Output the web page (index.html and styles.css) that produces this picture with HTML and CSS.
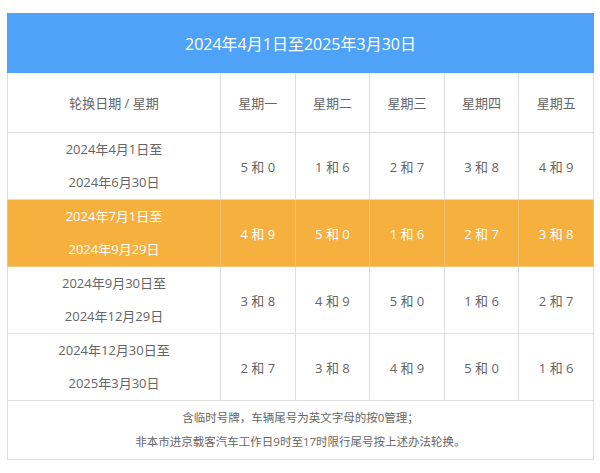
FILE: index.html
```html
<!DOCTYPE html>
<html lang="zh-CN">
<head>
<meta charset="utf-8">
<link rel="stylesheet" href="styles.css">
</head>
<body>
<div class="wrap">
<table class="plan">
  <colgroup>
    <col class="c-date"><col class="c-day"><col class="c-day"><col class="c-day"><col class="c-day"><col class="c-day">
  </colgroup>
  <tr class="title"><td colspan="6">2024年4月1日至2025年3月30日</td></tr>
  <tr class="head">
    <td>轮换日期 / 星期</td><td>星期一</td><td>星期二</td><td>星期三</td><td>星期四</td><td>星期五</td>
  </tr>
  <tr class="row">
    <td><p>2024年4月1日至</p><p>2024年6月30日</p></td>
    <td>5 和 0</td><td>1 和 6</td><td>2 和 7</td><td>3 和 8</td><td>4 和 9</td>
  </tr>
  <tr class="row current">
    <td><p>2024年7月1日至</p><p>2024年9月29日</p></td>
    <td>4 和 9</td><td>5 和 0</td><td>1 和 6</td><td>2 和 7</td><td>3 和 8</td>
  </tr>
  <tr class="row">
    <td><p>2024年9月30日至</p><p>2024年12月29日</p></td>
    <td>3 和 8</td><td>4 和 9</td><td>5 和 0</td><td>1 和 6</td><td>2 和 7</td>
  </tr>
  <tr class="row">
    <td><p>2024年12月30日至</p><p>2025年3月30日</p></td>
    <td>2 和 7</td><td>3 和 8</td><td>4 和 9</td><td>5 和 0</td><td>1 和 6</td>
  </tr>
  <tr class="note">
    <td colspan="6"><p>含临时号牌，车辆尾号为英文字母的按0管理；</p><p>非本市进京载客汽车工作日9时至17时限行尾号按上述办法轮换。</p></td>
  </tr>
</table>
</div>
</body>
</html>
```

FILE: styles.css
```css
html, body {
  margin: 0;
  padding: 0;
  background: #ffffff;
}
body {
  font-family: "Open Sans", "Noto Sans CJK SC", sans-serif;
  color: #666666;
}
.wrap {
  padding: 13px 7px 0 7px;
}
.plan {
  width: 586px;
  border-collapse: collapse;
  table-layout: fixed;
  border: 1px solid #dddddd;
}
.c-date { width: 213px; }
.c-day { width: 74.6px; }
.plan td {
  border: 1px solid #dddddd;
  text-align: center;
  vertical-align: middle;
  padding: 0;
  font-size: 13px;
}
.plan p {
  margin: 0;
  line-height: 33px;
}
.title td {
  background: #4ea2f8;
  border-color: #4ea2f8;
  color: #ffffff;
  font-size: 16px;
  height: 58px;
}
.head td {
  height: 59px;
}
.row td {
  height: 66px;
}
.current td {
  background: #f6b03e;
  color: #ffffff;
  border-color: #f3c272;
}
.note td {
  height: 58px;
  font-size: 11.5px;
}
.note p {
  line-height: 24px;
}
```
